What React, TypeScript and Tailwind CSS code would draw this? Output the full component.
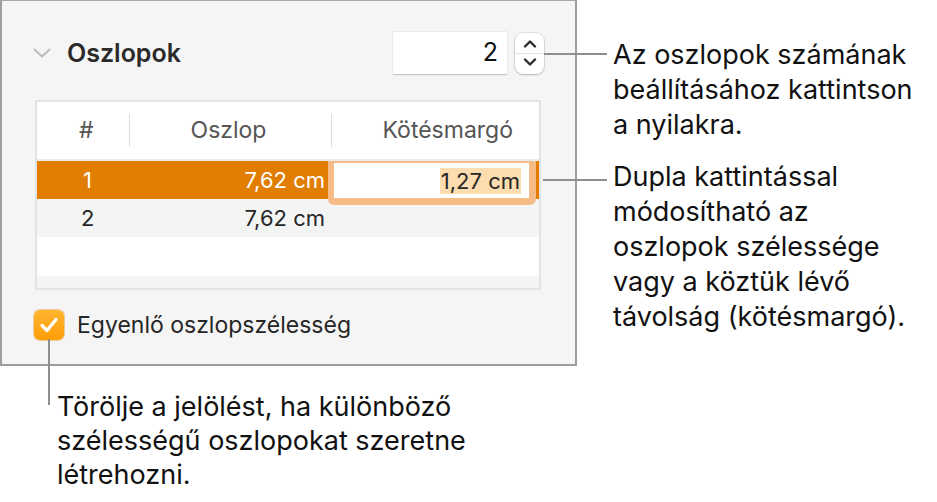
import React from "react";

const font = { fontFamily: "Inter, 'Noto Sans', sans-serif" };

const Chevron = ({ dir }: { dir: "up" | "down" }) => (
  <svg width="14" height="9" viewBox="0 0 14 9" fill="none">
    <path
      d={dir === "up" ? "M2 7.5 L7 2.5 L12 7.5" : "M2 1.5 L7 6.5 L12 1.5"}
      stroke="#2b2b2b"
      strokeWidth="2.4"
      strokeLinecap="round"
      strokeLinejoin="round"
    />
  </svg>
);

const Stepper = () => (
  <div className="flex flex-col items-center w-[29px] h-[41px] bg-white rounded-[8px] shadow-[0_0_0_1px_rgba(0,0,0,0.08),0_1px_2px_rgba(0,0,0,0.2)]">
    <div className="flex-1 flex items-center justify-center pt-[2px]">
      <Chevron dir="up" />
    </div>
    <div className="w-full h-px bg-[#e4e4e4]" />
    <div className="flex-1 flex items-center justify-center pb-[2px]">
      <Chevron dir="down" />
    </div>
  </div>
);

const Panel = () => (
  <div className="w-[577px] h-[366px] bg-[#f5f5f5] border-t border-b-2 border-l-2 border-r-2 border-[#9d9d9d] border-t-[#a8a8a8]">
    {/* header */}
    <div className="flex items-center h-[85px] pt-[19px]">
      <div className="ml-[30px] w-[20px] flex justify-center">
        <svg width="18" height="10" viewBox="0 0 18 10" fill="none">
          <path d="M1.5 1.5 L9 8.5 L16.5 1.5" stroke="#bdbdbd" strokeWidth="2" strokeLinecap="round" strokeLinejoin="round" />
        </svg>
      </div>
      <span className="ml-[15px] text-[25px] font-semibold text-[#2a2a2a] leading-none">Oszlopok</span>
      <div className="ml-auto flex items-center gap-[8px] mr-[31px]">
        <div className="w-[114px] h-[43px] bg-white border-b border-[#c9c9c9] shadow-[0_0_0_1px_rgba(0,0,0,0.04)] flex items-center justify-end pr-[9px] text-[25px] text-[#111]">
          2
        </div>
        <Stepper />
      </div>
    </div>

    {/* table */}
    <div className="ml-[33px] mt-[14px] w-[506px] h-[190px] border-2 border-[#e3e3e3] bg-[#f3f4f4] text-[22px] text-[#262626] overflow-hidden">
      <div className="flex items-center h-[57px] bg-white text-[#555] text-[23px]">
        <div className="w-[92px] pl-[42px]">#</div>
        <div className="w-px h-[33px] bg-[#dcdcdc]" />
        <div className="w-[201px] text-center pr-[4px]">Oszlop</div>
        <div className="w-px h-[33px] bg-[#dcdcdc]" />
        <div className="flex-1 text-right pr-[26px]">Kötésmargó</div>
      </div>
      <div className="h-[2px] bg-[#ececec]" />
      <div className="relative flex items-center h-[38px] bg-[#e17d00] text-white">
        <div className="w-[92px] pl-[46px]">1</div>
        <div className="w-[203px] text-right pr-[7px]">7,62 cm</div>
        <div className="absolute left-[291px] top-0 w-[208px] h-[44px] bg-[#f6bc87] rounded-b-[6px] pl-[6px] pr-[7px] pb-[7px] pt-[2px]">
          <div className="w-full h-full bg-white flex items-center justify-end pr-[8px]">
            <span className="bg-[#fddcb0] text-[#262626] leading-[26px] px-[1px]">1,27 cm</span>
          </div>
        </div>
      </div>
      <div className="flex items-center h-[38px] bg-[#f3f4f4]">
        <div className="w-[92px] pl-[44px]">2</div>
        <div className="w-[203px] text-right pr-[7px]">7,62 cm</div>
      </div>
      <div className="h-[39px] bg-white" />
    </div>

    {/* checkbox */}
    <div className="flex items-center mt-[18px] ml-[32px]">
      <div className="w-[30px] h-[30px] rounded-[6px] bg-gradient-to-b from-[#ffb52e] to-[#ff9d00] shadow-[0_0_0_1px_rgba(220,130,0,0.35)] flex items-center justify-center">
        <svg width="20" height="16" viewBox="0 0 20 16" fill="none">
          <path d="M3 8.5 L8 13.5 L17 2.5" stroke="white" strokeWidth="3.2" strokeLinecap="round" strokeLinejoin="round" />
        </svg>
      </div>
      <span className="ml-[13px] text-[23px] text-[#262626]">Egyenlő oszlopszélesség</span>
    </div>
  </div>
);

export default function App() {
  return (
    <div className="relative w-[937px] h-[502px] bg-white overflow-hidden" style={font}>
      <div className="flex">
        <div className="flex flex-col">
          <Panel />
          <p className="mt-[24px] ml-[57px] text-[27px] leading-[34px] text-[#111]">
            Törölje a jelölést, ha különböző
            <br />
            szélességű oszlopokat szeretne
            <br />
            létrehozni.
          </p>
        </div>
        <div className="ml-[36px] mt-[37px] flex flex-col gap-[17px] text-[27px] leading-[35px] text-[#111]">
          <p>
            Az oszlopok számának
            <br />
            beállításához kattintson
            <br />a nyilakra.
          </p>
          <p>
            Dupla kattintással
            <br />
            módosítható az
            <br />
            oszlopok szélessége
            <br />
            vagy a köztük lévő
            <br />
            távolság (kötésmargó).
          </p>
        </div>
      </div>

      {/* leader lines */}
      <div className="absolute left-[544px] top-[53px] w-[63px] h-[2px] bg-[#8e8e8e]" />
      <div className="absolute left-[543px] top-[179px] w-[64px] h-[2px] bg-[#8e8e8e]" />
      <div className="absolute left-[48px] top-[339px] w-[2px] h-[66px] bg-[#8e8e8e]" />
    </div>
  );
}
